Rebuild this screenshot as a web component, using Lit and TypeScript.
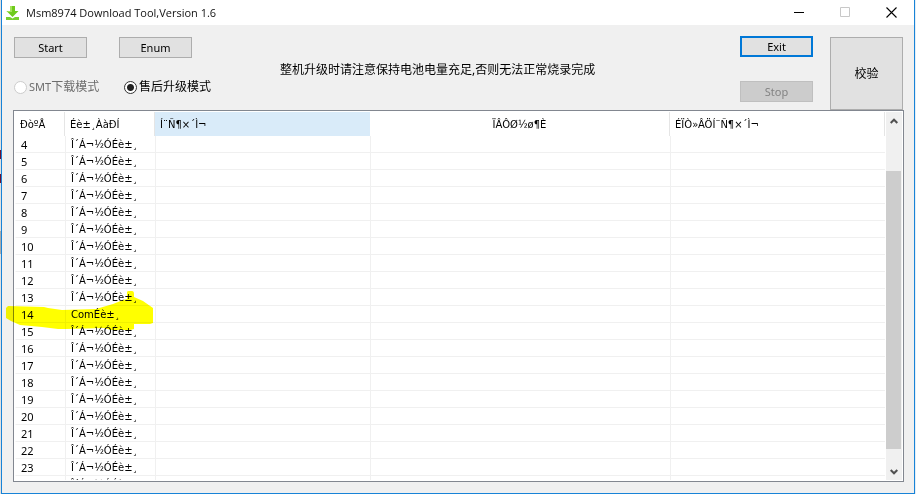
import { LitElement, html, css } from "lit";
import { customElement, state } from "lit/decorators.js";

@customElement("title-bar")
class TitleBar extends LitElement {
  static styles = css`
    :host { display: flex; align-items: center; height: 25px; background: #fff; padding-left: 4px; }
    .logo { width: 13px; height: 14px; }
    h1 { margin: 0 0 0 7px; flex: 1; font: 400 11px/16px "Open Sans", "Noto Sans", sans-serif; color: #111; white-space: nowrap; }
    .caption { display: flex; align-items: center; justify-content: center; width: 46px; height: 24px; padding: 0; border: 0; background: none; }
    .caption svg { width: 11px; height: 11px; }
  `;
  render() {
    return html`
      <svg class="logo" viewBox="0 0 13 14" aria-hidden="true">
        <path d="M4 0h5v5h3.500L6.500 11 .5 5H4z" fill="#6fcb1c"/>
        <path d="M4 0h2v6H2l-1.500-1H4z" fill="#a5e35c"/>
        <path d="M0 11h4l2.500 1.500L9 11h4v3H0z" fill="#79cf30"/>
      </svg>
      <h1>Msm8974 Download Tool,Version 1.6</h1>
      <button class="caption" aria-label="Minimize"><svg viewBox="0 0 11 11"><path d="M0 5.500h10" stroke="#000"/></svg></button>
      <button class="caption" aria-label="Maximize" disabled><svg viewBox="0 0 11 11"><path d="M.5.5h9v9h-9z" fill="none" stroke="#c8c8c8"/></svg></button>
      <button class="caption" aria-label="Close"><svg viewBox="0 0 11 11"><path d="M.5.5l10 10M10.500.5l-10 10" stroke="#000" stroke-width="1.100"/></svg></button>
    `;
  }
}

@customElement("tool-bar")
class ToolBar extends LitElement {
  static styles = css`
    :host { display: flex; align-items: flex-start; height: 85px; padding: 0 11px 0 12px; box-sizing: border-box; color: #000; font: 12px/16px "Noto Sans", "Noto Sans CJK SC", sans-serif; }
    .modes { display: grid; grid-template-columns: 105px 105px; row-gap: 21px; padding-top: 12px; }
    button { box-sizing: border-box; width: 73px; height: 21px; padding: 0; border: 1px solid #adadad; background: #e1e1e1; color: #000; font: 11px/16px "Noto Sans", "Noto Sans CJK SC", sans-serif; }
    .exit { border: 2px solid #0078d7; }
    button:disabled { border-color: #bfbfbf; background: #ccc; color: #838383; }
    .verify { height: 73px; font-size: 12px; }
    label { display: flex; align-items: center; gap: 2px; height: 16px; padding-left: 5px; white-space: nowrap; }
    .off { padding-left: 0; color: #6d6d6d; }
    .latin { font-size: 11px; }
    input { appearance: none; box-sizing: border-box; width: 13px; height: 13px; margin: 0; border: 1px solid #333; border-radius: 50%; background: #fff; }
    input:checked { background: radial-gradient(circle, #222 0 3px, #fff 4px); }
    input:disabled { border-color: #ccc; }
    .notice { flex: 1; margin: 37px 0 0 56px; white-space: nowrap; }
    .actions { display: flex; flex-direction: column; gap: 24px; margin-right: 17px; padding-top: 11px; }
    .side { padding-top: 12px; }
  `;
  render() {
    return html`
      <div class="modes">
        <button>Start</button>
        <button>Enum</button>
        <label class="off"><input type="radio" name="mode" disabled><span><span class="latin">SMT</span>下载模式</span></label>
        <label><input type="radio" name="mode" checked><span>售后升级模式</span></label>
      </div>
      <p class="notice">整机升级时请注意保持电池电量充足,否则无法正常烧录完成</p>
      <div class="actions">
        <button class="exit">Exit</button>
        <button disabled>Stop</button>
      </div>
      <div class="side"><button class="verify">校验</button></div>
    `;
  }
}

@customElement("device-list")
class DeviceList extends LitElement {
  static styles = css`
    :host { display: flex; position: relative; min-height: 0; }
    .frame { display: flex; flex: 1; min-width: 0; gap: 1px; padding: 1px; border: 1px solid #828790; background: #fff; overflow: hidden; }
    .view { flex: 1; min-width: 0; overflow: hidden; }
    table { width: 100%; table-layout: fixed; border-collapse: separate; border-spacing: 0; color: #000; font: 10px/14px "DejaVu Sans", sans-serif; }
    th, td { box-sizing: border-box; padding: 1px 5px 0; text-align: left; font-weight: 400; white-space: nowrap; overflow: hidden; }
    th { height: 24px; border-right: 1px solid #e5e5e5; }
    td { height: 17px; border-bottom: 1px solid #f0f0f0; border-left: 1px solid #f0f0f0; }
    td:first-child { border-left-color: #fff; font: 11px/14px "Noto Sans", sans-serif; }
    .no { width: 50px; }
    .type { width: 90px; }
    .status { width: 215px; }
    .progress { width: 300px; }
    .hot { background: #d9ebf9; border-right-color: #d9ebf9; }
    .center { text-align: center; }
    .scroll { display: flex; flex-direction: column; width: 16px; background: #f0f0f0; }
    .scroll button { flex: none; height: 17px; padding: 0; border: 0; background: none; display: flex; align-items: center; justify-content: center; }
    .scroll svg { width: 8px; height: 6px; }
    .track { flex: 1; display: flex; flex-direction: column; }
    .before { flex: 42; }
    .thumb { flex: 278; width: 15px; background: #cdcdcd; }
    .after { flex: 14; }
    .marker { position: absolute; left: -7px; top: 181px; width: 148px; height: 40px; mix-blend-mode: multiply; pointer-events: none; }
  `;

  @state() private rows = Array.from({ length: 21 }, (_, i) => ({
    no: i + 4,
    type: i + 4 === 14 ? "ComÉè±¸" : "Î´Á¬½ÓÉè±¸",
  }));

  render() {
    return html`
      <div class="frame">
        <div class="view">
          <table>
            <colgroup><col class="no"><col class="type"><col class="status"><col class="progress"><col class="status"></colgroup>
            <thead>
              <tr>
                <th>ÐòºÅ</th><th>Éè±¸ÀàÐÍ</th><th class="hot">Í¨Ñ¶×´Ì¬</th>
                <th class="center">ÏÂÔØ½ø¶È</th><th>ÉÏÒ»ÂÖÍ¨Ñ¶×´Ì¬</th>
              </tr>
            </thead>
            <tbody>
              ${this.rows.map((r) => html`<tr><td>${r.no}</td><td>${r.type}</td><td></td><td></td><td></td></tr>`)}
            </tbody>
          </table>
        </div>
        <div class="scroll">
          <button aria-label="Scroll up"><svg viewBox="0 0 8 6"><path d="M.7 5L4 1.700 7.300 5" fill="none" stroke="#505050" stroke-width="2"/></svg></button>
          <div class="track"><div class="before"></div><div class="thumb"></div><div class="after"></div></div>
          <button aria-label="Scroll down"><svg viewBox="0 0 8 6"><path d="M.7 1L4 4.300 7.300 1" fill="none" stroke="#505050" stroke-width="2"/></svg></button>
        </div>
      </div>
      <svg class="marker" viewBox="0 0 148 40" aria-hidden="true">
        <path d="M2 15L38 16 42 17 56 19 90 18 107 13 117 9 121 8V1Q121 0 123 0H126Q128 0 128 3V6L137 10 147 17V32L144 33H128V38L124 39H105L98 37 60 38 52 38 36 36 14 34 5 30 0 27V17Z" fill="#ff0"/>
      </svg>
    `;
  }
}

@customElement("app-root")
class AppRoot extends LitElement {
  static styles = css`
    :host { display: flex; height: 100vh; box-sizing: border-box; padding-right: 1px; background: #e4eef6; }
    .behind { width: 1px; background: linear-gradient(#e0e0e0 0 150px, #6b1030 150px 159px, #e0e0e0 159px 174px, #6b1030 174px 183px, #e0e0e0 183px 231px, #aaa 231px 254px, #e0e0e0 254px); }
    .window { display: flex; flex-direction: column; flex: 1; min-width: 0; border: 1px solid #1883d7; border-top: 0; background: #f0f0f0; }
    device-list { flex: 1; margin: 0 10px 11px 11px; }
  `;
  render() {
    return html`
      <div class="behind"></div>
      <main class="window">
        <title-bar></title-bar>
        <tool-bar></tool-bar>
        <device-list></device-list>
      </main>
    `;
  }
}
